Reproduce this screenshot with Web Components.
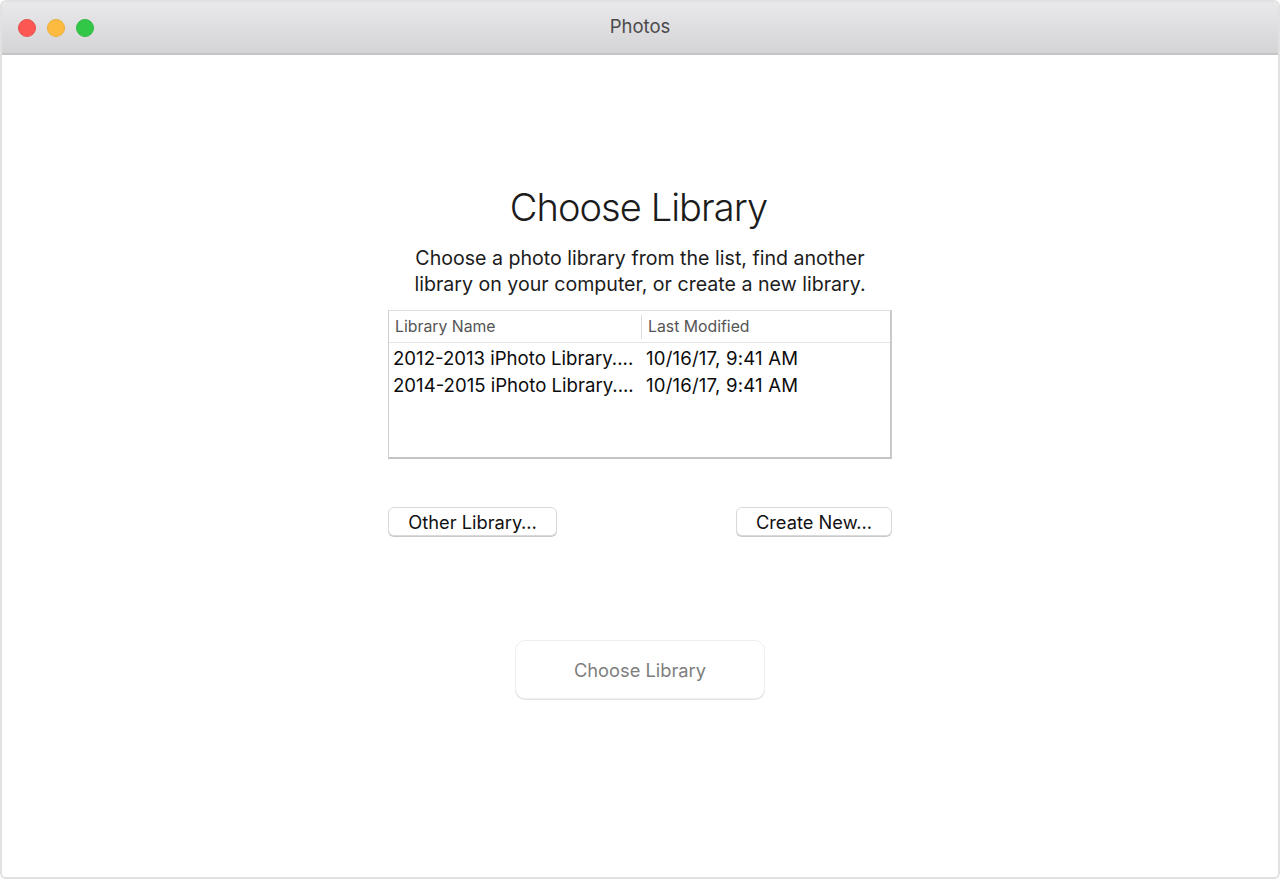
<!DOCTYPE html>
<html>
<head>
<meta charset="utf-8">
<title>Photos</title>
<style>
  html,body{margin:0;padding:0;background:#fff;font-family:Inter,"Noto Sans",sans-serif;}
</style>
</head>
<body>
<mac-window window-title="Photos">
  <library-chooser>
    <library-row name="2012-2013 iPhoto Library...." modified="10/16/17, 9:41 AM"></library-row>
    <library-row name="2014-2015 iPhoto Library...." modified="10/16/17, 9:41 AM"></library-row>
  </library-chooser>
</mac-window>

<script>
class MacWindow extends HTMLElement {
  constructor() {
    super();
    this.attachShadow({mode:"open"});
    this.shadowRoot.innerHTML = `
    <style>
      :host{display:block;width:1280px;height:879px;box-sizing:border-box;border:2px solid #e1e1e1;border-radius:6px;overflow:hidden;background:#fff;}
      .bar{height:53px;box-sizing:border-box;border-bottom:2px solid #c6c5c6;background:linear-gradient(#e9e8ea,#d4d3d5);display:flex;align-items:center;position:relative;padding-left:16px;gap:11px;}
      .dot{width:18px;height:18px;border-radius:50%;box-sizing:border-box;}
      .r{background:#fc5753;border:1px solid #e9504c;}
      .y{background:#fdbc40;border:1px solid #e9ad3b;}
      .g{background:#33c748;border:1px solid #2fb742;}
      .title{position:absolute;left:0;right:0;top:12px;text-align:center;font-size:18.5px;line-height:24px;color:#4c4b4c;}
      .main{display:flex;justify-content:center;}
    </style>
    <div class="bar">
      <span class="dot r"></span><span class="dot y"></span><span class="dot g"></span>
      <div class="title">${this.getAttribute("window-title")}</div>
    </div>
    <div class="main"><slot></slot></div>`;
  }
}
customElements.define("mac-window", MacWindow);

class LibraryRow extends HTMLElement {
  constructor() {
    super();
    this.attachShadow({mode:"open"});
    this.shadowRoot.innerHTML = `
    <style>
      :host{display:grid;grid-template-columns:253px 1fr;height:27px;align-items:center;font-size:18.6px;color:#0c0c0c;white-space:nowrap;}
      .name{padding-left:3px;}
      .mod{padding-left:3px;letter-spacing:.18px;}
    </style>
    <span class="name">${this.getAttribute("name")}</span>
    <span class="mod">${this.getAttribute("modified")}</span>`;
  }
}
customElements.define("library-row", LibraryRow);

class PushButton extends HTMLElement {
  constructor() {
    super();
    this.attachShadow({mode:"open"});
    this.shadowRoot.innerHTML = `
    <style>
      :host{display:flex;align-items:center;justify-content:center;box-sizing:border-box;height:29px;margin-bottom:1px;background:#fff;border:1px solid #dadada;border-radius:6px;box-shadow:0 1px 0 #c9c9c9;font-size:18.3px;color:#111;}
      :host([big]){height:59px;margin-bottom:1px;width:250px;border:1px solid #efefef;box-shadow:0 1px 0 #e2e2e2;border-radius:10px;color:#7e7e7e;}
    </style>
    <slot></slot>`;
  }
}
customElements.define("push-button", PushButton);

class LibraryChooser extends HTMLElement {
  constructor() {
    super();
    this.attachShadow({mode:"open"});
    this.shadowRoot.innerHTML = `
    <style>
      :host{display:flex;flex-direction:column;align-items:center;width:504px;}
      h1{margin:126px 0 0;padding-right:3px;font-size:38px;font-weight:300;line-height:52px;color:#1b1b1b;letter-spacing:-.93px;}
      p{margin:12px 0 0;font-size:19.6px;line-height:26px;color:#1c1c1c;text-align:center;white-space:nowrap;}
      .table{margin-top:13px;width:504px;height:149px;box-sizing:border-box;border:1px solid #e0e0e0;border-left:1px solid #cfcfcf;border-right:2px solid #c9c9c9;border-bottom:2px solid #c4c4c4;display:flex;flex-direction:column;}
      .head{display:grid;grid-template-columns:252px 1fr;height:32px;box-sizing:border-box;border-bottom:1px solid #e3e3e3;font-size:15.8px;color:#555;align-items:center;}
      .head span{padding-left:6px;}
      .head span+span{border-left:1px solid #dcdcdc;padding-left:6px;height:24px;line-height:24px;}
      .rows{padding-top:1px;padding-left:1px;}
      .buttons{margin-top:48px;width:504px;display:flex;justify-content:space-between;}
      .other{width:169px;}
      .create{width:156px;}
      .go{margin-top:103px;}
    </style>
    <h1>Choose Library</h1>
    <p>Choose a photo library from the list, find another<br>library on your computer, or create a new library.</p>
    <div class="table">
      <div class="head"><span>Library Name</span><span>Last Modified</span></div>
      <div class="rows"><slot></slot></div>
    </div>
    <div class="buttons">
      <push-button class="other">Other Library…</push-button>
      <push-button class="create">Create New…</push-button>
    </div>
    <push-button class="go" big>Choose Library</push-button>`;
  }
}
customElements.define("library-chooser", LibraryChooser);
</script>
</body>
</html>
